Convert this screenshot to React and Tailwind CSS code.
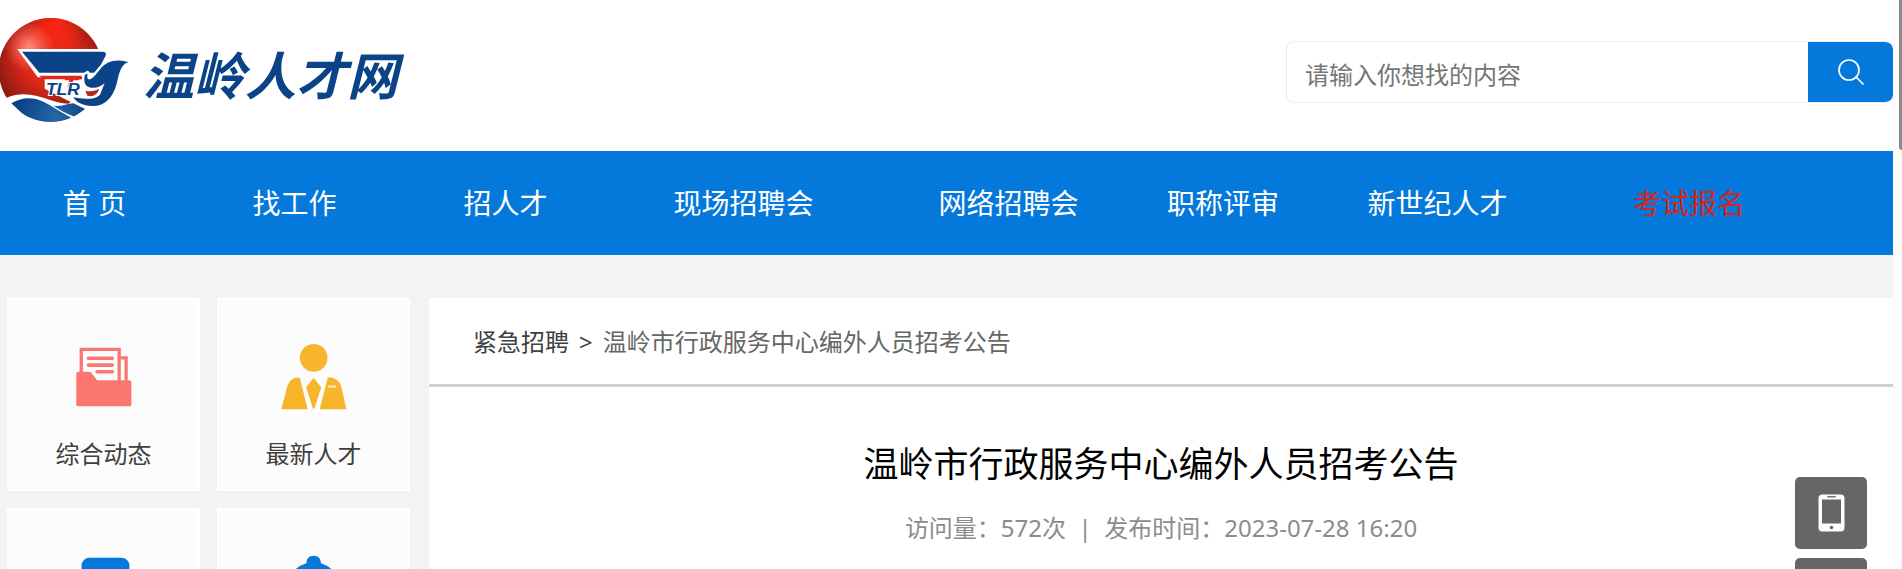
const NAV = [
  { label: "首 页" },
  { label: "找工作" },
  { label: "招人才" },
  { label: "现场招聘会" },
  { label: "网络招聘会" },
  { label: "职称评审" },
  { label: "新世纪人才" },
  { label: "考试报名", hot: true },
];

function Emblem() {
  return (
    <svg viewBox="0 0 405 345" className="h-[115px] w-[135px] shrink-0" aria-hidden="true">
      <defs>
        <radialGradient id="sun" gradientUnits="userSpaceOnUse" cx="150" cy="140" r="165">
          <stop offset="0" stopColor="#e8301c" />
          <stop offset="0.5" stopColor="#dd2818" />
          <stop offset="1" stopColor="#8e1a12" />
        </radialGradient>
        <radialGradient id="top" gradientUnits="userSpaceOnUse" cx="165" cy="40" r="90">
          <stop offset="0" stopColor="#ff2410" />
          <stop offset="1" stopColor="#ff2410" stopOpacity="0" />
        </radialGradient>
        <radialGradient id="shine" gradientUnits="userSpaceOnUse" cx="88" cy="105" r="75">
          <stop offset="0" stopColor="#ff8d80" />
          <stop offset="1" stopColor="#ff6a5a" stopOpacity="0" />
        </radialGradient>
        <radialGradient id="sea" gradientUnits="userSpaceOnUse" cx="165" cy="315" r="110">
          <stop offset="0" stopColor="#2567a5" />
          <stop offset="1" stopColor="#0b4389" />
        </radialGradient>
        <clipPath id="disc">
          <circle cx="152" cy="174" r="156" />
        </clipPath>
      </defs>
      <g clipPath="url(#disc)">
        <path d="M-10 10H312V108L250 190L225 260L205 275C150 275 95 225 18 258L-10 262Z" fill="url(#sun)" />
        <path d="M-10 10H312V108L250 190L205 275C150 275 95 225 18 258L-10 262Z" fill="url(#top)" />
        <path d="M-10 10H312V108L250 190L205 275C150 275 95 225 18 258L-10 262Z" fill="url(#shine)" />
        <path d="M34 274C80 246 122 262 150 280C176 297 196 307 214 318L188 336H100Z" fill="url(#sea)" />
        <path d="M160 281C185 286 204 274 220 274L256 291L224 314C200 306 182 295 160 281Z" fill="url(#sea)" />
      </g>
      <path d="M52 111H304C318 111 322 120 316 132L290 186L240 196H113Z" fill="#fff" />
      <path d="M66 119H304C318 119 320 124 316 133L290 182H118Z" fill="#0b4389" />
      <path d="M118 191H246L238 202H130Z" fill="#dd2a1c" />
      <path d="M134 202H252L262 268L212 270L134 230Z" fill="#fff" />
      <path d="M196 196H243L236 205H220L212 226H202L208 205H194Z" fill="#dd2a1c" />
      <path
        d="M262 184L262 198Q266 206 276 199C298 181 306 150 345 146Q368 143 385 151C362 157 357 185 350 215C338 262 308 284 276 282C250 281 230 273 220 256C248 262 285 264 300 248L314 213C300 228 275 232 260 222Q250 212 254 190Z"
        fill="#0b4389"
        stroke="#fff"
        strokeWidth="14"
        strokeLinejoin="round"
        paintOrder="stroke"
      />
      <path d="M256 236Q274 242 298 231C292 248 278 256 262 251Z" fill="#b8271d" stroke="#fff" strokeWidth="8" strokeLinejoin="round" paintOrder="stroke" />
      <text x="138" y="250" fontFamily="Liberation Sans, sans-serif" fontSize="52" fontWeight="700" fontStyle="italic" fill="#0b4389" stroke="#fff" strokeWidth="6" paintOrder="stroke">TLR</text>
    </svg>
  );
}

function FolderIcon() {
  return (
    <svg viewBox="211 192 200 200" className="size-[66px]" aria-hidden="true">
      <g fill="none" stroke="#fa7771" strokeWidth="10">
        <path d="M242 290V208H357V310" />
        <path d="M360 234H378V310" />
      </g>
      <g stroke="#fa7771" strokeWidth="11" strokeLinecap="round">
        <path d="M264 235H336M264 256H336M290 276H336" />
      </g>
      <path d="M233 276H270L290 302H388Q394 302 394 308V375Q394 381 388 381H233Q227 381 227 375V282Q227 276 233 276Z" fill="#fa7771" />
    </svg>
  );
}

function PersonIcon() {
  return (
    <svg viewBox="841 192 200 200" className="size-[66px]" aria-hidden="true">
      <g fill="#f7b52b">
        <circle cx="940" cy="234" r="42" />
        <path d="M842 390L860 320Q868 292 898 294L922 390Z" />
        <path d="M1039 390L1024 322Q1014 292 983 293L958 390Z" />
        <path d="M940 294L963 323L942 388H938L917 323Z" />
      </g>
      <path d="M984 321H1008" stroke="#fde9bd" strokeWidth="7" />
    </svg>
  );
}

function DocIcon() {
  return (
    <svg viewBox="211 822 200 200" className="size-[66px]" aria-hidden="true">
      <rect x="243" y="833" width="145" height="178" rx="24" fill="#0479db" />
      <path d="M275 905H355M275 940H355" stroke="#fff" strokeWidth="10" />
    </svg>
  );
}

function BellIcon() {
  return (
    <svg viewBox="841 822 200 200" className="size-[66px]" aria-hidden="true">
      <path d="M918 850Q918 827 940 827T962 850Q1014 866 1022 925V980H858V925Q866 866 918 850Z" fill="#0479db" />
    </svg>
  );
}

const CARDS = [
  { id: "news", label: "综合动态", Icon: FolderIcon },
  { id: "talent", label: "最新人才", Icon: PersonIcon },
  { id: "docs", Icon: DocIcon },
  { id: "notices", Icon: BellIcon },
];

export default function App() {
  return (
    <div className="flex h-screen overflow-hidden bg-[#fbfbfb] font-['Noto_Sans','Noto_Sans_CJK_SC',sans-serif]">
      <div className="min-w-0 flex-1 bg-[#f3f3f3]">
        <header className="flex h-[151px] items-start justify-between bg-white">
          <a href="#" className="flex pt-3 text-[#0b4389]">
            <Emblem />
            <span className="pt-7 pl-2 font-['Noto_Sans_CJK_SC',sans-serif] text-[51px] leading-[66px] font-bold whitespace-nowrap italic">
              温岭人才网
            </span>
          </a>
          <form className="mt-[41px] flex h-[62px] w-[607px] overflow-hidden rounded-lg border border-r-0 border-[#ececec]" onSubmit={(e) => e.preventDefault()}>
            <input
              type="search"
              aria-label="搜索"
              placeholder="请输入你想找的内容"
              className="min-w-0 flex-1 px-[18px] pt-1.5 text-2xl outline-none placeholder:text-[#757575]"
            />
            <button type="submit" aria-label="搜索" className="flex w-[85px] items-center justify-center rounded-r-md bg-[#0479db] text-white">
              <svg viewBox="0 0 26 26" className="size-[26px]" fill="none" stroke="currentColor" strokeWidth="1.7" aria-hidden="true">
                <circle cx="11" cy="11" r="10" />
                <path d="M18 18L25 25" strokeLinecap="round" />
              </svg>
            </button>
          </form>
        </header>

        <nav className="grid h-[104px] grid-cols-[189fr_211fr_211fr_265fr_265fr_164fr_265fr_238fr_85fr] items-center bg-[#0479db] text-[28px] leading-10 whitespace-nowrap">
          {NAV.map((n) => (
            <a key={n.label} href="#" className={n.hot ? "text-center text-[#dc2318]" : "text-center text-white"}>
              {n.label}
            </a>
          ))}
        </nav>

        <div className="flex items-start pt-[43px] pl-[7px]">
          <aside className="grid shrink-0 grid-cols-2 gap-[17px]">
            {CARDS.map(({ id, label, Icon }) => (
              <a key={id} href={`#${id}`} className="flex h-[193px] w-[193px] flex-col items-center border-2 border-white bg-[#fcfcfc] pt-11 text-[#404040]">
                <Icon />
                {label && <span className="pt-[26px] text-2xl leading-9">{label}</span>}
              </a>
            ))}
          </aside>

          <main className="ml-[19px] min-h-[400px] min-w-0 flex-1 bg-white">
            <div className="flex h-[89px] items-center gap-2.5 border-b-3 border-[#d0d0d0] pt-0.5 pl-11 text-2xl text-[#666]">
              <a href="#" className="text-[#404040]">紧急招聘</a>
              <span className="text-[#404040]">&gt;</span>
              <span>温岭市行政服务中心编外人员招考公告</span>
            </div>
            <h1 className="pt-[51px] text-center text-[35px] leading-[52px] text-black">温岭市行政服务中心编外人员招考公告</h1>
            <p className="pt-5 text-center text-2xl leading-9 whitespace-pre text-[#8c8c8c]">
              访问量：572次&nbsp; |&nbsp; 发布时间：2023-07-28 16:20
            </p>
          </main>
        </div>
      </div>

      <div className="flex w-[9px] shrink-0 justify-end">
        <div className="h-[150px] w-[3px] rounded-bl-sm bg-[#8a8a8a]" />
      </div>

      <div className="fixed top-[477px] right-[35px] flex flex-col gap-[9px]">
        <button type="button" aria-label="手机版" className="flex size-[72px] items-center justify-center rounded-[5px] bg-[#666]">
          <svg viewBox="0 0 27 38" className="h-[38px] w-[27px]" aria-hidden="true">
            <rect x="0.5" y="0.5" width="26" height="37" rx="4" fill="#fff" />
            <rect x="4" y="5.5" width="19" height="24" fill="#666" />
            <rect x="9" y="2" width="9" height="1.6" rx="0.8" fill="#777" />
            <circle cx="13.5" cy="33.5" r="1.8" fill="#666" />
          </svg>
        </button>
        <button type="button" aria-label="返回顶部" className="size-[72px] rounded-[5px] bg-[#666]" />
      </div>
    </div>
  );
}
